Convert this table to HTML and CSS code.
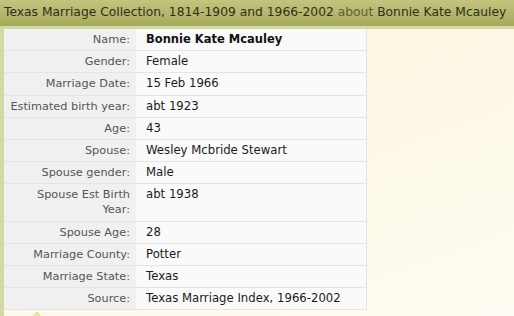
FILE: index.html
```html
<!DOCTYPE html>
<html>
<head>
<meta charset="utf-8">
<link rel="stylesheet" href="styles.css">
</head>
<body>
<div class="header"><span class="title">Texas Marriage Collection, 1814-1909 and 1966-2002</span> <span class="about">about</span> <span class="title">Bonnie Kate Mcauley</span></div>
<div class="main">
  <table class="record">
    <tr><th>Name:</th><td class="name">Bonnie Kate Mcauley</td></tr>
    <tr><th>Gender:</th><td>Female</td></tr>
    <tr><th>Marriage Date:</th><td>15 Feb 1966</td></tr>
    <tr><th>Estimated birth year:</th><td>abt 1923</td></tr>
    <tr><th>Age:</th><td>43</td></tr>
    <tr><th>Spouse:</th><td>Wesley Mcbride Stewart</td></tr>
    <tr><th>Spouse gender:</th><td>Male</td></tr>
    <tr><th>Spouse Est Birth Year:</th><td>abt 1938</td></tr>
    <tr><th>Spouse Age:</th><td>28</td></tr>
    <tr><th>Marriage County:</th><td>Potter</td></tr>
    <tr><th>Marriage State:</th><td>Texas</td></tr>
    <tr><th>Source:</th><td>Texas Marriage Index, 1966-2002</td></tr>
  </table>
  <div class="below">
    <svg class="tip" width="14" height="8" viewBox="0 0 14 8"><path d="M1 8 L6 2 L11 8 Z" fill="#f7e9a0" stroke="#e8d27a" stroke-width="1"/></svg>
  </div>
</div>
</body>
</html>
```
FILE: styles.css
```css
html, body {
  margin: 0;
  padding: 0;
}
body {
  width: 514px;
  height: 316px;
  overflow: hidden;
  font-family: "DejaVu Sans", Verdana, sans-serif;
  background: linear-gradient(160deg, #fdf5d9 0%, #fdf8e6 50%, #fffcf3 100%);
}
.header {
  height: 26px;
  line-height: 25px;
  padding-left: 4px;
  font-size: 12.3px;
  color: #2f2f18;
  background: linear-gradient(#c3c57f, #a7a95a);
  border-bottom: 3px solid #d3d9a4;
  white-space: nowrap;
}
.about {
  color: #5d5e3a;
}
.main {
  border-left: 4px solid #d3d9a4;
  height: 300px;
}
.record {
  border-collapse: collapse;
  width: 363px;
}
.record th {
  width: 120px;
  background: #f0f0f0;
  color: #555;
  font-size: 11.3px;
  font-weight: normal;
  text-align: right;
  padding: 3.1px 6px 3.1px 6px;
  line-height: 15px;
  border-bottom: 1px solid #e4e4e4;
  vertical-align: top;
}
.record td {
  background: #fafafa;
  color: #1a1a1a;
  font-size: 11.7px;
  padding: 3.1px 6px 3.1px 10px;
  line-height: 15px;
  border-bottom: 1px solid #e4e4e4;
  border-right: 1px solid #e4e4e4;
  vertical-align: top;
}
.record td.name {
  font-weight: bold;
  font-size: 11.5px;
  color: #111;
}
.below {
  padding-left: 27px;
}
.tip {
  display: block;
}
```
